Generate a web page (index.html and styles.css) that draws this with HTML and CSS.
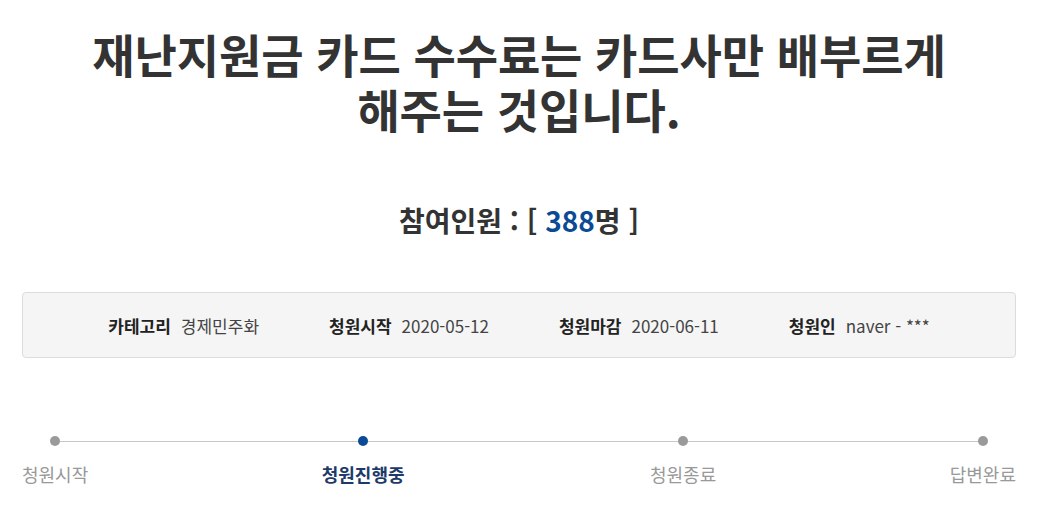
FILE: index.html
```html
<!DOCTYPE html>
<html lang="ko">
<head>
<meta charset="utf-8">
<title>청원</title>
<link rel="stylesheet" href="styles.css">
</head>
<body>
<div class="wrap">
  <h1 class="title"><span class="line">재난지원금 카드 수수료는 카드사만 배부르게</span><span class="line">해주는 것입니다.</span></h1>
  <p class="count">참여인원 : [ <span class="num">388</span>명 ]</p>
  <div class="info">
    <div class="info-item"><span class="label">카테고리</span><span class="value">경제민주화</span></div>
    <div class="info-item"><span class="label">청원시작</span><span class="value">2020-05-12</span></div>
    <div class="info-item"><span class="label">청원마감</span><span class="value">2020-06-11</span></div>
    <div class="info-item"><span class="label">청원인</span><span class="value">naver - ***</span></div>
  </div>
  <div class="steps">
    <div class="step"><span class="dot"></span><span class="step-label">청원시작</span></div>
    <div class="step active"><span class="dot"></span><span class="step-label">청원진행중</span></div>
    <div class="step"><span class="dot"></span><span class="step-label">청원종료</span></div>
    <div class="step"><span class="dot"></span><span class="step-label">답변완료</span></div>
  </div>
</div>
</body>
</html>
```

FILE: styles.css
```css
html, body {
  margin: 0;
  padding: 0;
  background: #fff;
}
body {
  font-family: "Noto Sans CJK KR", "Noto Sans", sans-serif;
  color: #333;
}
.wrap {
  width: 994px;
  margin-left: 22px;
}
.title {
  margin: 0;
  padding-top: 26px;
  font-size: 46px;
  line-height: 55px;
  font-weight: 700;
  text-align: center;
  color: #333;
  letter-spacing: -0.1px;
}
.title .line {
  display: block;
  height: 55px;
}
.count {
  margin: 64px 0 0;
  font-size: 28px;
  line-height: 40px;
  font-weight: 700;
  text-align: center;
  color: #333;
}
.num {
  color: #0b4a94;
}
.info {
  margin-top: 52px;
  height: 64px;
  border: 1px solid #dcdcdc;
  border-radius: 4px;
  background: #f5f5f5;
  display: flex;
  justify-content: center;
  align-items: center;
  gap: 70px;
  font-size: 17px;
}
.info-item {
  display: flex;
  gap: 10px;
}
.label {
  font-weight: 700;
  color: #222;
}
.value {
  color: #444;
}
.steps {
  position: relative;
  margin-top: 74px;
  display: flex;
  justify-content: space-between;
}
.steps::before {
  content: "";
  position: absolute;
  left: 31px;
  right: 32px;
  top: 9px;
  height: 1px;
  background: #c8c8c8;
}
.step {
  display: flex;
  flex-direction: column;
  align-items: center;
  gap: 16px;
  position: relative;
}
.step.active {
  margin-right: 12px;
}
.dot {
  width: 10px;
  height: 10px;
  border-radius: 50%;
  background: #9a9a9a;
  margin-top: 4px;
}
.step.active .dot {
  background: #0b4a94;
}
.step-label {
  font-size: 18px;
  line-height: 24px;
  color: #999;
}
.step.active .step-label {
  color: #1d3a6a;
  font-weight: 700;
}
```
